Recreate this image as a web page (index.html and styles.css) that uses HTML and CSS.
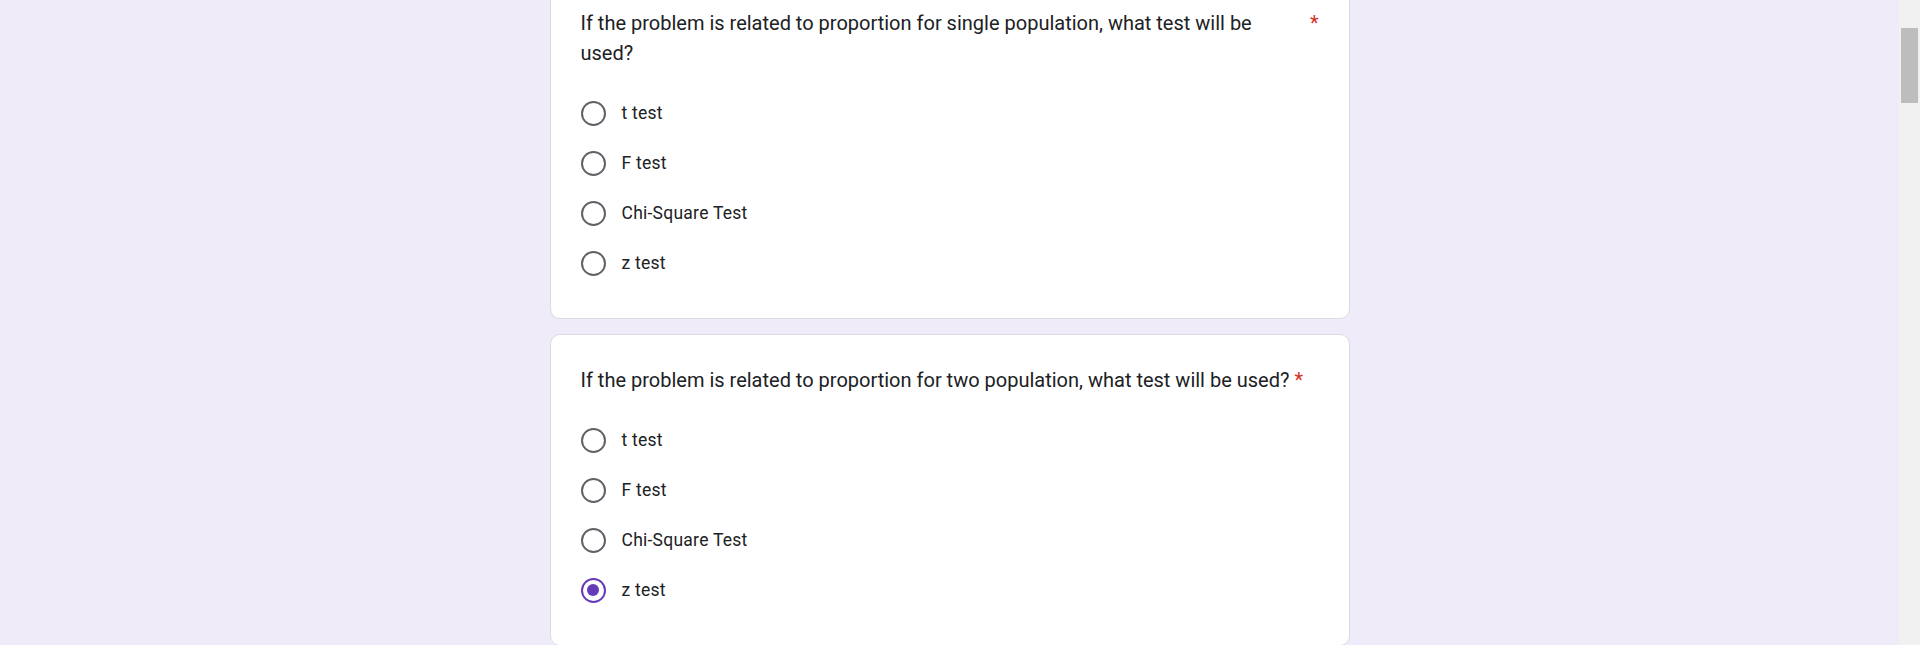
FILE: index.html
```html
<!DOCTYPE html>
<html lang="en">
<head>
<meta charset="utf-8">
<title>Form</title>
<link rel="stylesheet" href="styles.css">
</head>
<body>
<div class="viewport">
  <main class="page">
    <div class="form">
      <section class="card card-first">
        <div class="q-title">
          <span class="q-text">If the problem is related to proportion for single population, what test will be used?</span>
          <span class="required">*</span>
        </div>
        <div class="options">
          <label class="option"><span class="radio"></span><span class="opt-label">t test</span></label>
          <label class="option"><span class="radio"></span><span class="opt-label">F test</span></label>
          <label class="option"><span class="radio"></span><span class="opt-label">Chi-Square Test</span></label>
          <label class="option"><span class="radio"></span><span class="opt-label">z test</span></label>
        </div>
      </section>
      <section class="card">
        <div class="q-title">
          <span class="q-text">If the problem is related to proportion for two population, what test will be used?</span>
          <span class="required">*</span>
        </div>
        <div class="options">
          <label class="option"><span class="radio"></span><span class="opt-label">t test</span></label>
          <label class="option"><span class="radio"></span><span class="opt-label">F test</span></label>
          <label class="option"><span class="radio"></span><span class="opt-label">Chi-Square Test</span></label>
          <label class="option"><span class="radio checked"></span><span class="opt-label">z test</span></label>
        </div>
      </section>
    </div>
  </main>
  <div class="scrollbar"><div class="thumb"></div></div>
</div>
</body>
</html>
```
FILE: styles.css
```css
* { box-sizing: border-box; }
html, body { margin: 0; padding: 0; height: 100%; overflow: hidden; }
body {
  font-family: Roboto, "Liberation Sans", Arial, sans-serif;
  color: #202124;
  background: #f0ebf8;
}
.viewport {
  display: flex;
  height: 645px;
}
.page {
  flex: 1;
  background: #f0ebf8;
  overflow: hidden;
}
.form {
  width: 800px;
  margin: -23px auto 0;
  display: flex;
  flex-direction: column;
  gap: 15px;
}
.card {
  background: #fff;
  border: 1px solid #dadce0;
  border-radius: 10px;
  padding: 30px;
}
.q-title {
  display: flex;
  align-items: flex-start;
  font-size: 20px;
  line-height: 30px;
  letter-spacing: 0;
}
.q-text {
  max-width: 716px;
}
.required {
  color: #d93025;
  padding-left: 5px;
}
.card-first .required { margin-left: auto; }
.options {
  margin-top: 20px;
  display: flex;
  flex-direction: column;
}
.option {
  height: 50px;
  display: flex;
  align-items: center;
  gap: 16px;
  font-size: 17.5px;
  letter-spacing: 0.25px;
}
.radio {
  width: 25px;
  height: 25px;
  border: 2.5px solid #5f6368;
  border-radius: 50%;
  flex: none;
  display: flex;
  align-items: center;
  justify-content: center;
}
.radio.checked {
  border-color: #673ab7;
}
.radio.checked::after {
  content: "";
  width: 12px;
  height: 12px;
  border-radius: 50%;
  background: #673ab7;
}
.scrollbar {
  width: 21px;
  background: #f1f1f1;
  flex: none;
  padding: 28px 2px 0 2px;
}
.thumb {
  height: 75px;
  background: #bdbdbd;
}
```
